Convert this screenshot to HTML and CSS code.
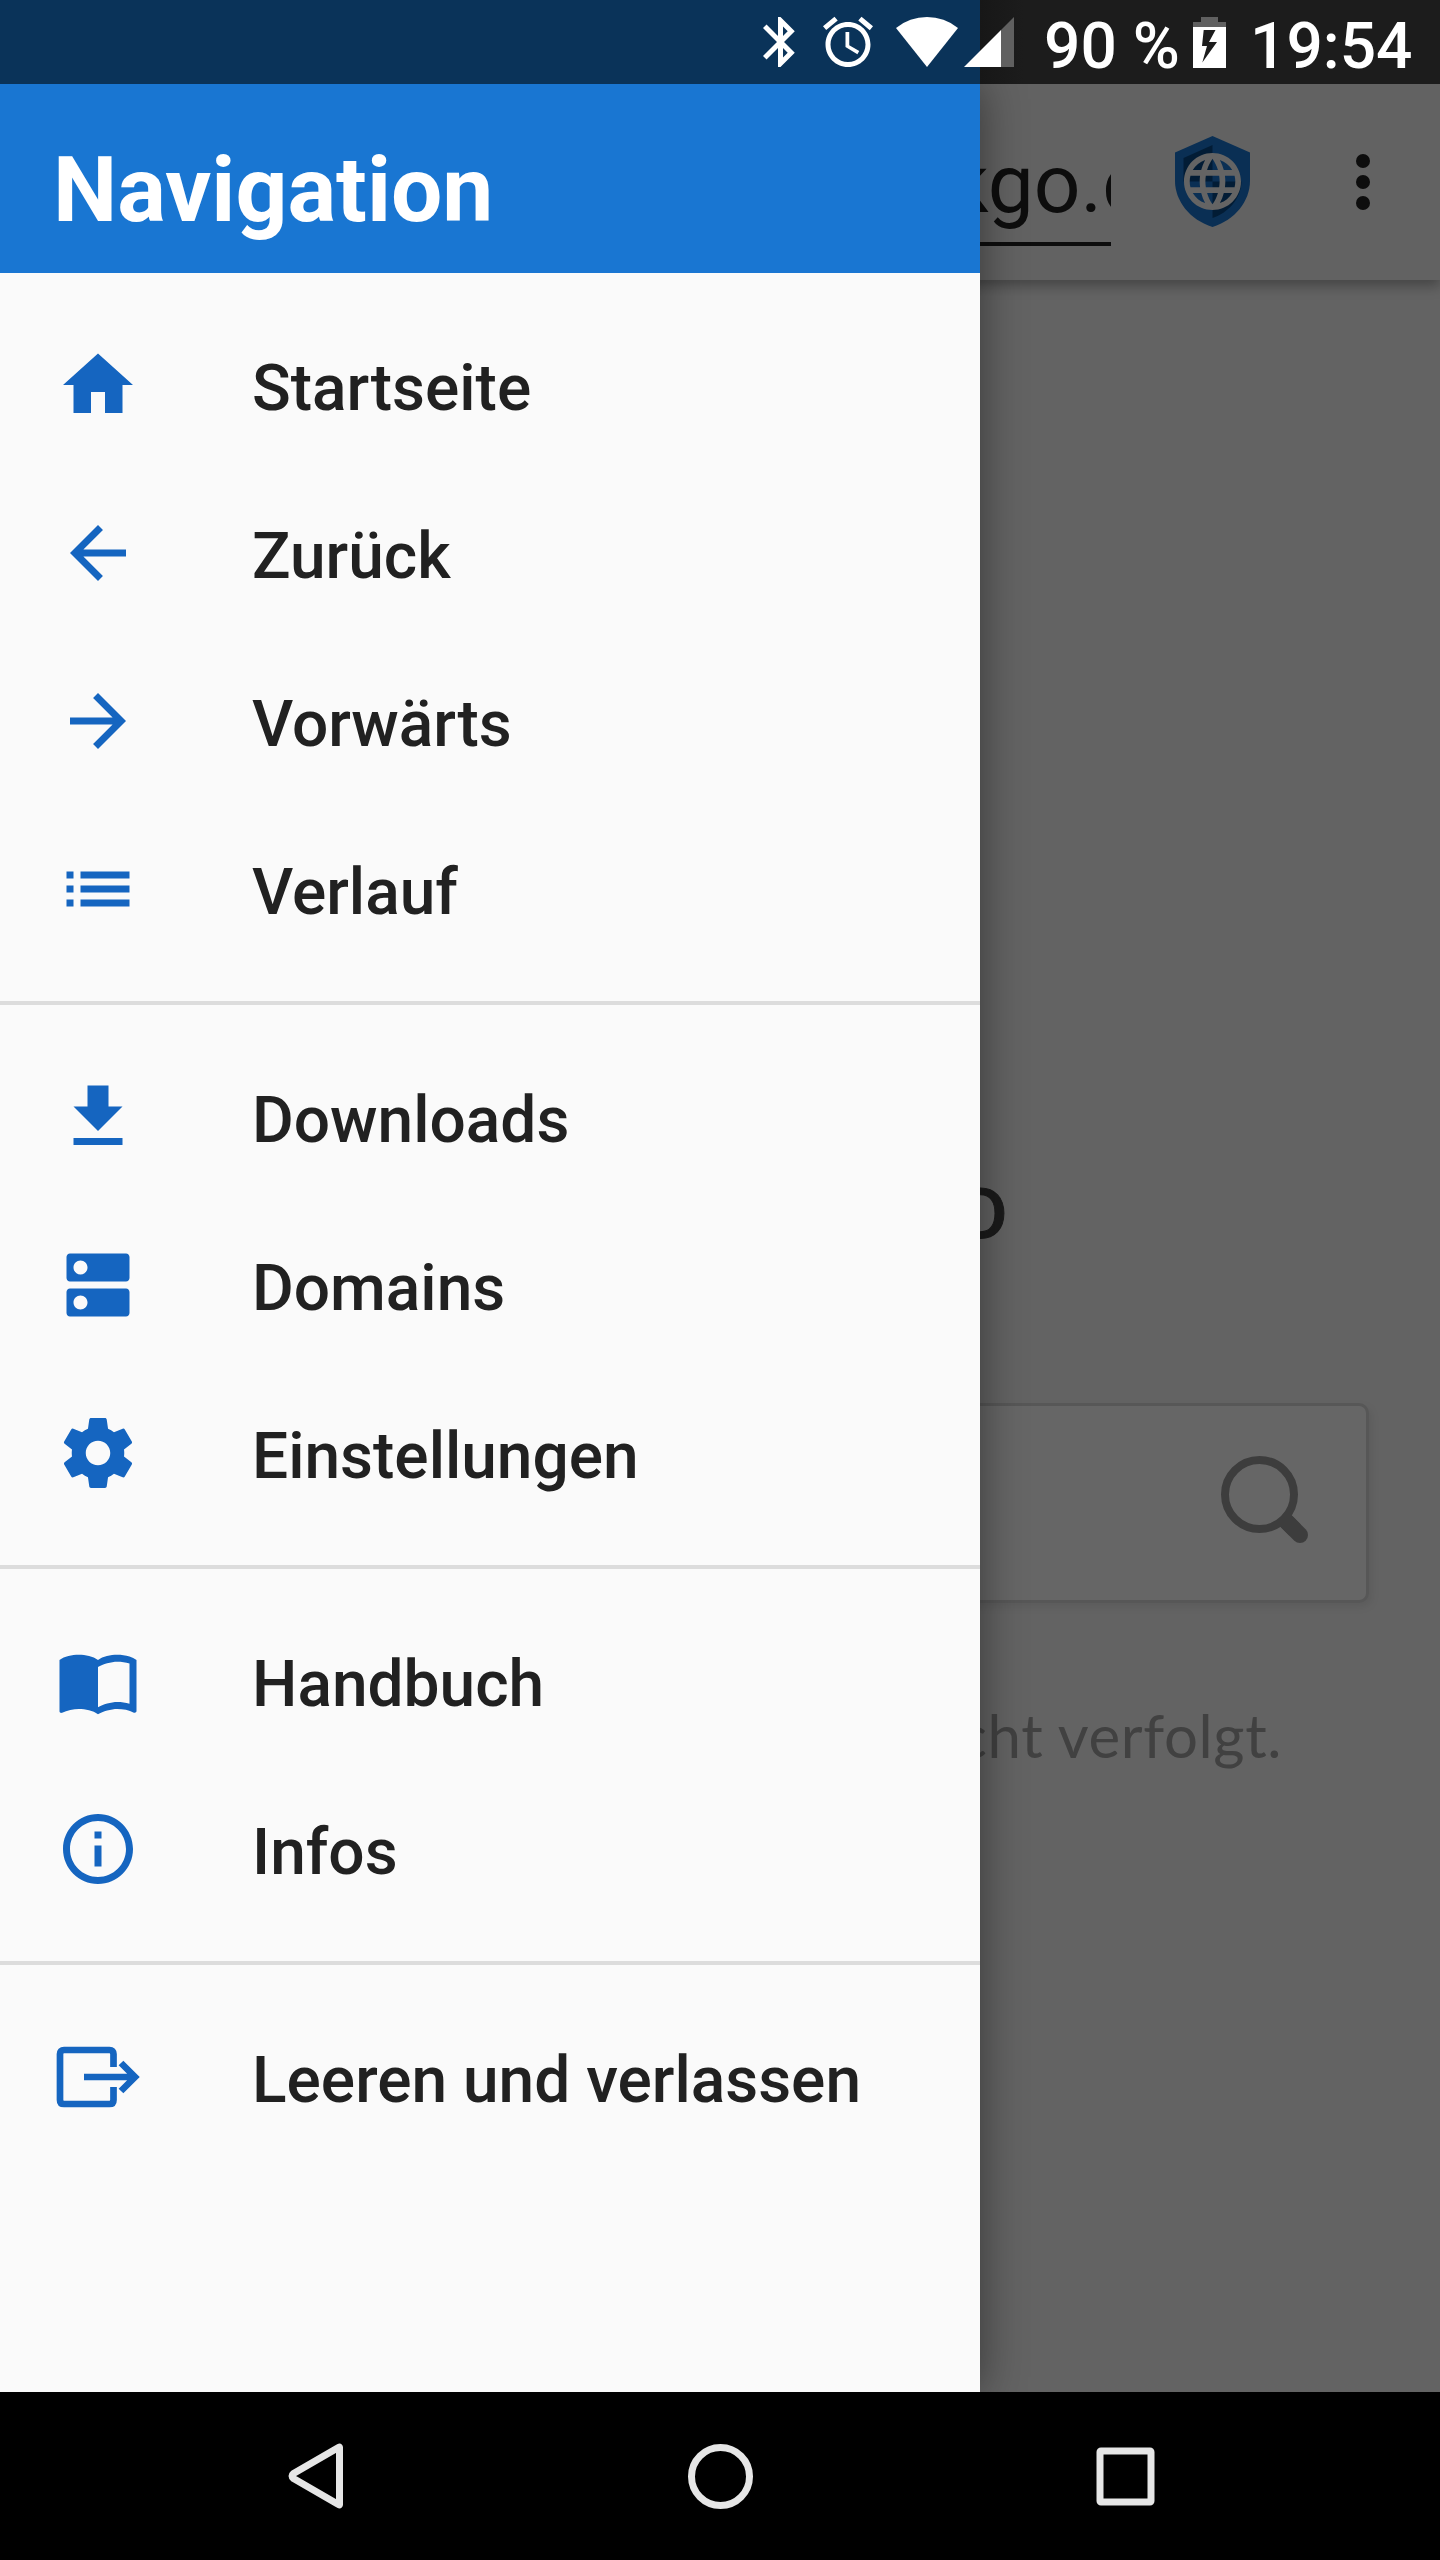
FILE: index.html
```html
<!DOCTYPE html>
<html lang="de">
<head>
<meta charset="utf-8">
<title>Navigation</title>
<link rel="stylesheet" href="styles.css">
</head>
<body>
<div class="screen">
  <header class="status">
    <svg class="st-bt" viewBox="5 2 12.8 20"><path d="M17.71 7.71L12 2h-1v7.59L6.41 5 5 6.41 10.59 12 5 17.59 6.41 19 11 14.41V22h1l5.71-5.71-4.3-4.29 4.3-4.29zM13 5.83l1.88 1.88L13 9.59V5.83zm1.88 10.46L13 18.17v-3.76l1.88 1.88z"/></svg>
    <svg class="st-alarm" viewBox="2 2 20 20"><path d="M22 5.72l-4.6-3.86-1.29 1.53 4.6 3.86L22 5.72zM7.88 3.39L6.6 1.86 2 5.71l1.29 1.53 4.59-3.85zM12.5 8H11v6l4.75 2.85.75-1.23-4-2.37V8zM12 4c-4.97 0-9 4.03-9 9s4.02 9 9 9c4.97 0 9-4.03 9-9s-4.03-9-9-9zm0 16c-3.87 0-7-3.13-7-7s3.13-7 7-7 7 3.13 7 7-3.13 7-7 7z"/></svg>
    <svg class="st-wifi" viewBox="0 0 62 50"><path d="M0 11A49.2 49.2 0 0 1 62 11L31 50z"/></svg>
    <svg class="st-signal" viewBox="0 0 50 50"><path class="faint" d="M37 13L50 0V50H37z"/><path d="M0 50L37 13V50z"/></svg>
    <span class="st-percent">90 %</span>
    <svg class="st-battery" viewBox="0 0 33 51"><path class="faint" d="M8 0h17v5h8v5H0V5h8z"/><path fill-rule="evenodd" d="M0 10h33v41H0zM10.700 13L9 29h5L9.300 45.500 24 25h-8L22.500 13z"/></svg>
    <span class="st-clock">19:54</span>
  </header>

  <main class="main">
    <section class="page">
      <div class="toolbar">
        <div class="url">kgo.c</div>
        <svg class="shield" viewBox="0 0 75 91">
          <path fill="#1976d2" d="M37.500 0L75 16.500V45C75 65 60 84 37.500 91C15 84 0 65 0 45V16.500z"/>
          <path fill="#064785" d="M37.500 9V45.500H8.500V22zM37.500 45.500H66.500C66 63 53 77 37.500 82z"/>
          <svg x="3.300" y="11.300" width="68.400" height="68.400" viewBox="0 0 24 24"><path fill="#f9f9f9" d="M11.990 2C6.470 2 2 6.480 2 12s4.470 10 9.990 10C17.520 22 22 17.520 22 12S17.520 2 11.990 2zm6.930 6h-2.950c-.32-1.250-.78-2.450-1.380-3.560 1.840.63 3.370 1.910 4.330 3.560zM12 4.040c.83 1.200 1.480 2.530 1.910 3.960h-3.820c.43-1.430 1.080-2.760 1.910-3.960zM4.260 14C4.100 13.360 4 12.690 4 12s.1-1.360.26-2h3.380c-.08.66-.14 1.320-.14 2s.06 1.340.14 2H4.260zm.82 2h2.950c.32 1.250.78 2.450 1.380 3.560-1.840-.63-3.370-1.900-4.330-3.560zm2.950-8H5.080c.96-1.660 2.490-2.930 4.330-3.560C8.810 5.550 8.350 6.750 8.030 8zM12 19.960c-.83-1.200-1.480-2.530-1.910-3.960h3.820c-.43 1.430-1.080 2.760-1.910 3.960zM14.340 14H9.660c-.09-.66-.16-1.320-.16-2s.07-1.350.16-2h4.680c.09.65.16 1.320.16 2s-.07 1.340-.16 2zm.25 5.560c.6-1.110 1.060-2.310 1.380-3.560h2.950c-.96 1.650-2.490 2.930-4.330 3.560zM16.360 14c.08-.66.14-1.320.14-2s-.06-1.340-.14-2h3.380c.16.64.26 1.310.26 2s-.1 1.360-.26 2h-3.380z"/></svg>
        </svg>
        <div class="more"><i></i><i></i><i></i></div>
      </div>
      <div class="content">
        <div class="brand">Go</div>
        <div class="search">
          <svg class="lens" viewBox="0 0 90 90"><circle cx="38.500" cy="38.500" r="34.500"/><path class="grip" d="M66 66L79 79"/><path class="neck" d="M62 62L74 74"/></svg>
        </div>
        <div class="tagline">nicht verfolgt.</div>
      </div>
    </section>
    <div class="scrim"></div>
  </main>

  <aside class="drawer">
    <h1 class="title">Navigation</h1>
    <ul class="group">
      <li class="item"><svg viewBox="0 0 24 24"><path d="M10 20v-6h4v6h5v-8h3L12 3 2 12h3v8z"/></svg><span>Startseite</span></li>
      <li class="item"><svg viewBox="0 0 24 24"><path d="M20 11H7.830l5.590-5.590L12 4l-8 8 8 8 1.410-1.410L7.830 13H20v-2z"/></svg><span>Zurück</span></li>
      <li class="item"><svg viewBox="0 0 24 24"><path d="M12 4l-1.410 1.410L16.170 11H4v2h12.170l-5.580 5.590L12 20l8-8z"/></svg><span>Vorwärts</span></li>
      <li class="item"><svg viewBox="0 0 24 24"><path d="M3 13h2v-2H3v2zm0 4h2v-2H3v2zm0-8h2V7H3v2zm4 4h14v-2H7v2zm0 4h14v-2H7v2zM7 7v2h14V7H7z"/></svg><span>Verlauf</span></li>
    </ul>
    <ul class="group">
      <li class="item"><svg viewBox="0 0 24 24"><path d="M19 9h-4V3H9v6H5l7 7 7-7zM5 18v2h14v-2H5z"/></svg><span>Downloads</span></li>
      <li class="item"><svg viewBox="0 0 24 24"><path d="M20 13H4c-.55 0-1 .45-1 1v6c0 .55.45 1 1 1h16c.55 0 1-.45 1-1v-6c0-.55-.45-1-1-1zM7 19c-1.100 0-2-.9-2-2s.9-2 2-2 2 .9 2 2-.9 2-2 2zM20 3H4c-.55 0-1 .45-1 1v6c0 .55.45 1 1 1h16c.55 0 1-.45 1-1V4c0-.55-.45-1-1-1zM7 9c-1.100 0-2-.9-2-2s.9-2 2-2 2 .9 2 2-.9 2-2 2z"/></svg><span>Domains</span></li>
      <li class="item"><svg viewBox="0 0 24 24"><path d="M19.430 12.980c.04-.32.07-.64.07-.98s-.03-.66-.07-.98l2.110-1.650c.19-.15.24-.42.12-.64l-2-3.460c-.12-.22-.39-.3-.61-.22l-2.490 1c-.52-.4-1.080-.73-1.690-.98l-.38-2.650C14.460 2.180 14.250 2 14 2h-4c-.25 0-.46.18-.49.42l-.38 2.650c-.61.25-1.170.59-1.690.98l-2.490-1c-.23-.09-.49 0-.61.22l-2 3.460c-.13.22-.07.49.12.64l2.110 1.650c-.04.32-.07.65-.07.98s.03.66.07.98l-2.110 1.650c-.19.15-.24.42-.12.64l2 3.460c.12.22.39.3.61.22l2.490-1c.52.4 1.080.73 1.690.98l.38 2.650c.03.24.24.42.49.42h4c.25 0 .46-.18.49-.42l.38-2.650c.61-.25 1.170-.59 1.690-.98l2.490 1c.23.09.49 0 .61-.22l2-3.460c.12-.22.07-.49-.12-.64l-2.110-1.650zM12 15.500c-1.930 0-3.500-1.570-3.500-3.500s1.570-3.500 3.500-3.500 3.500 1.570 3.500 3.500-1.570 3.500-3.500 3.500z"/></svg><span>Einstellungen</span></li>
    </ul>
    <ul class="group">
      <li class="item"><svg viewBox="0 0 24 24"><path d="M21 5c-1.110-.35-2.330-.5-3.500-.5-1.950 0-4.050.4-5.500 1.500-1.450-1.100-3.550-1.500-5.500-1.500S2.450 4.900 1 6v14.650c0 .25.25.5.5.5.1 0 .15-.05.25-.05C3.100 20.450 5.050 20 6.500 20c1.950 0 4.050.4 5.500 1.500 1.350-.85 3.800-1.500 5.500-1.500 1.650 0 3.350.3 4.750 1.050.1.05.15.05.25.05.25 0 .5-.25.5-.5V6c-.6-.45-1.250-.75-2-1zm0 13.500c-1.100-.35-2.300-.5-3.500-.5-1.700 0-4.150.65-5.500 1.500V8c1.350-.85 3.800-1.500 5.500-1.500 1.200 0 2.400.15 3.500.5v11.500z"/></svg><span>Handbuch</span></li>
      <li class="item"><svg viewBox="0 0 24 24"><path d="M11 17h2v-6h-2v6zm1-15C6.480 2 2 6.480 2 12s4.480 10 10 10 10-4.480 10-10S17.520 2 12 2zm0 18c-4.410 0-8-3.590-8-8s3.590-8 8-8 8 3.590 8 8-3.590 8-8 8zM11 9h2V7h-2v2z"/></svg><span>Infos</span></li>
    </ul>
    <ul class="group">
      <li class="item"><svg class="line" viewBox="0 0 84 84"><path d="M57.500 32V19Q57.500 15 53.500 15H8Q4 15 4 19V65Q4 69 8 69H53.500Q57.500 69 57.500 65V52M28 42H77M65 28L79 42L65 56"/></svg><span>Leeren und verlassen</span></li>
    </ul>
  </aside>

  <nav class="navbar">
    <svg class="nav-icon" viewBox="0 0 66 66"><path d="M57.500 4.500V61.500Q57.500 62.500 56 61.200L11.500 35.500Q8.500 33 11.500 30.500L56 4.800Q57.500 3.500 57.500 4.500z"/></svg>
    <svg class="nav-icon" viewBox="0 0 66 66"><circle cx="33.500" cy="33.500" r="29"/></svg>
    <svg class="nav-icon" viewBox="0 0 66 66"><rect x="8" y="8" width="51" height="51" rx="1"/></svg>
  </nav>
</div>
</body>
</html>
```
FILE: styles.css
```css
* { box-sizing: border-box; }
body { margin: 0; font-family: Roboto, "Noto Sans", sans-serif; }
svg { display: block; flex: none; }

.screen {
  position: relative;
  width: 1440px;
  height: 2560px;
  display: flex;
  flex-direction: column;
  overflow: hidden;
  background: #000;
}

/* Status bar */
.status {
  position: relative;
  z-index: 3;
  height: 84px;
  display: flex;
  align-items: center;
  padding-left: 763px;
  background: linear-gradient(90deg, #0a3359 980px, #171717 980px, #1c1c1c 1024px);
  color: #fff;
  fill: #fff;
  font-size: 64px;
  font-weight: 500;
  line-height: 84px;
  white-space: nowrap;
}
.status .faint { fill: #606060; }
.st-bt { width: 32px; height: 50px; }
.st-alarm { width: 50px; height: 50px; margin-left: 28px; overflow: visible; }
.st-wifi { width: 62px; height: 50px; margin-left: 23px; }
.st-signal { width: 50px; height: 50px; margin-left: 6px; }
.st-percent { width: 149px; margin-left: 30px; padding-top: 9px; }
.st-battery { width: 33px; height: 51px; }
.st-clock { margin-left: 24px; padding-top: 9px; }

/* Browser page below the drawer */
.main {
  position: relative;
  flex: 1;
  overflow: hidden;
}
.page {
  height: 100%;
  display: flex;
  flex-direction: column;
  background: #f7f7f7;
}
.toolbar {
  height: 196px;
  flex: none;
  display: flex;
  align-items: flex-start;
  padding-left: 947px;
  background: #f5f5f5;
  box-shadow: 0 6px 12px rgba(0, 0, 0, .3);
}
.url {
  width: 164px;
  height: 162px;
  overflow: hidden;
  border-bottom: 4px solid #212121;
  color: #212121;
  font-size: 82px;
  line-height: 96px;
  padding-top: 52px;
  white-space: nowrap;
}
.shield { width: 75px; height: 91px; margin: 52px 0 0 64px; }
.more {
  display: flex;
  flex-direction: column;
  gap: 7px;
  margin: 70px 0 0 106px;
}
.more i { width: 14px; height: 14px; border-radius: 50%; background: #212121; }

.content { display: flex; flex-direction: column; padding: 0 71px; }
.brand {
  width: 937px;
  margin-top: 861px;
  height: 120px;
  text-align: right;
  font: 400 97px/120px Lato, sans-serif;
  color: #444;
  -webkit-text-stroke: 1px #444;
}
.search {
  height: 200px;
  margin-top: 142px;
  display: flex;
  justify-content: flex-end;
  padding: 50px 55px 0 0;
  border: 3px solid #d9d9d9;
  border-radius: 10px;
  background: #fff;
  box-shadow: 3px 4px 8px rgba(0, 0, 0, .08);
}
.lens { width: 90px; height: 90px; fill: none; stroke: #999; stroke-width: 8; }
.lens .grip { stroke-width: 16; stroke-linecap: round; }
.lens .neck { stroke-width: 16; }
.tagline {
  margin-top: 92px;
  padding-right: 87px;
  text-align: right;
  font: 400 60px/80px Lato, sans-serif;
  letter-spacing: .6px;
  color: #a2a2a2;
}
.scrim { position: absolute; inset: 0; background: rgba(0, 0, 0, .6); }

/* Drawer */
.drawer {
  position: absolute;
  z-index: 2;
  left: 0;
  top: 84px;
  width: 980px;
  height: 2308px;
  background: #fafafa;
  box-shadow: 0 0 42px rgba(0, 0, 0, .45);
}
.title {
  margin: 0;
  height: 189px;
  padding: 52px 0 0 53px;
  background: #1976d2;
  color: #fff;
  font-size: 91px;
  font-weight: 700;
  line-height: 108px;
}
.group { margin: 0; padding: 28px 0; list-style: none; }
.group + .group { border-top: 4px solid #dcdcdc; }
.item {
  height: 168px;
  display: flex;
  align-items: center;
  gap: 112px;
  padding-left: 56px;
  color: #212121;
  font-size: 64px;
  font-weight: 500;
  white-space: nowrap;
}
.item svg { width: 84px; height: 84px; fill: #1565c0; }
.item span { padding-top: 6px; }
.item .line { fill: none; stroke: #1565c0; stroke-width: 6.7; }

/* System navigation */
.navbar {
  position: relative;
  z-index: 3;
  height: 168px;
  display: grid;
  grid-template-columns: repeat(3, 405px);
  justify-content: center;
  justify-items: center;
  align-items: center;
  background: #000;
}
.nav-icon { width: 66px; height: 66px; fill: none; stroke: #e6e6e6; stroke-width: 7; stroke-linejoin: round; }
```
